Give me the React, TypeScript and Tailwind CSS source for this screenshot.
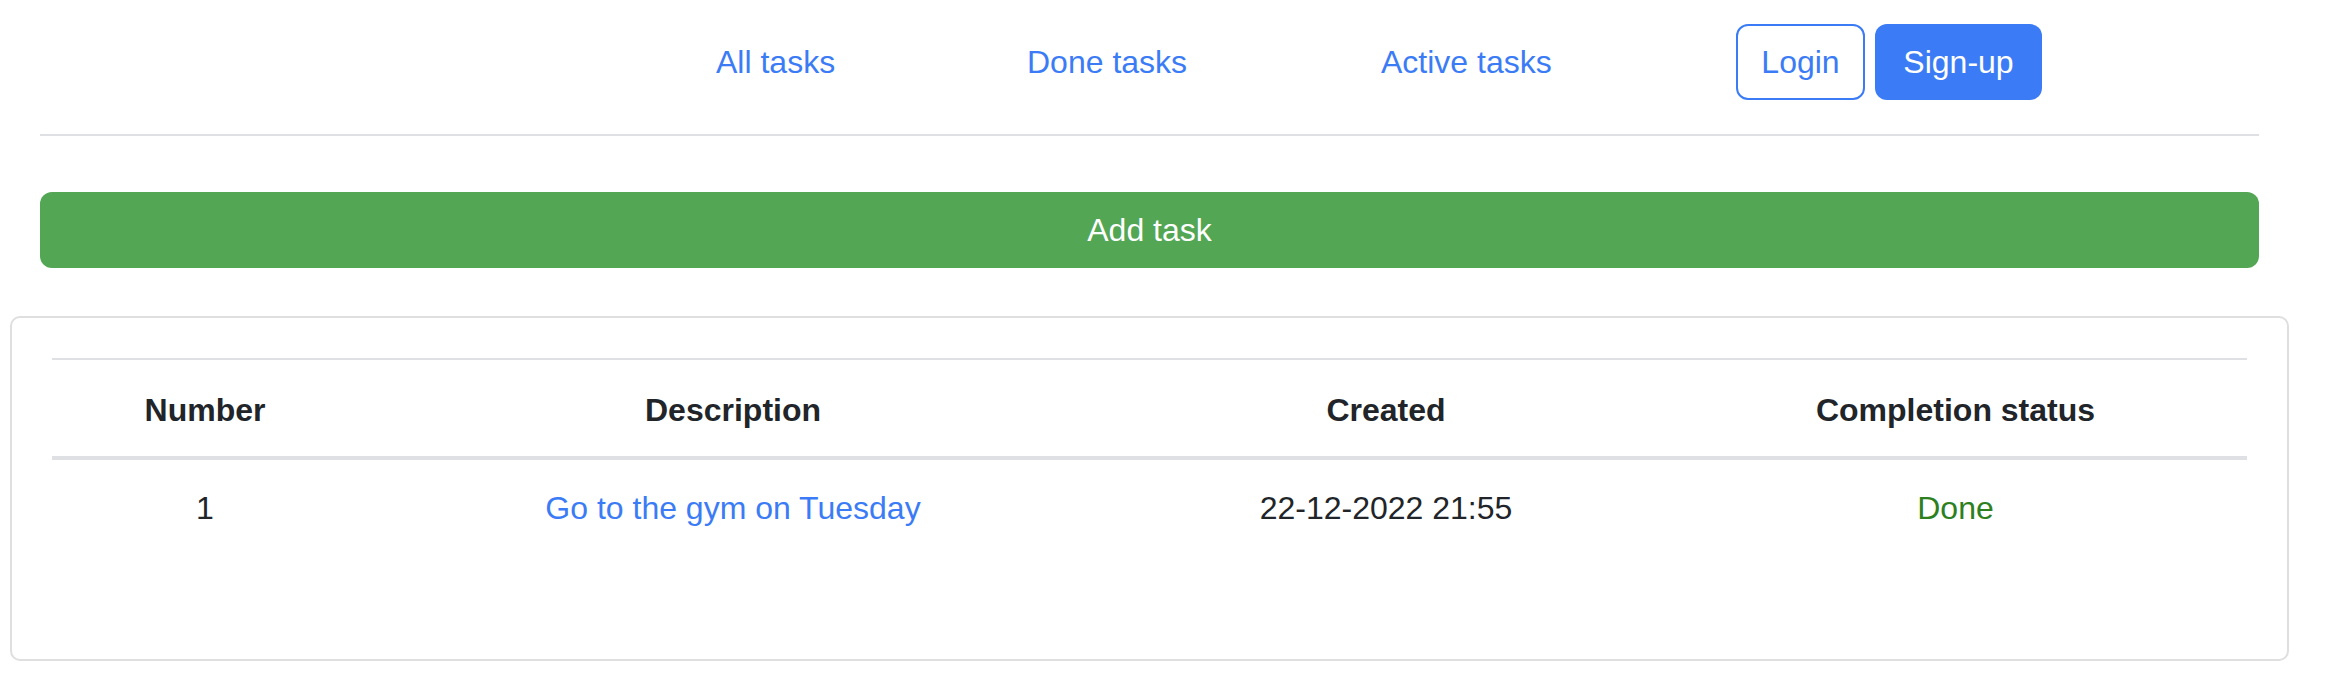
import React from "react";

export default function App() {
  return (
    <div className="w-[2328px] min-h-[690px] bg-white text-[#212529] text-[32px] leading-[48px] font-['Liberation_Sans',Arial,sans-serif]">
      {/* Nav */}
      <nav className="mt-[24px] h-[76px] flex items-center pl-[716px]">
        <a className="w-[311px] text-[#3b7cf6]">All tasks</a>
        <a className="w-[354px] text-[#3b7cf6]">Done tasks</a>
        <a className="w-[355px] text-[#3b7cf6]">Active tasks</a>
        <div className="flex gap-[10px]">
          <button className="w-[129px] h-[76px] border-2 border-[#3b7cf6] rounded-[12px] text-[#3b7cf6] flex items-center justify-center">
            Login
          </button>
          <button className="w-[167px] h-[76px] bg-[#3b7cf6] rounded-[12px] text-white flex items-center justify-center">
            Sign-up
          </button>
        </div>
      </nav>

      <div className="ml-[40px] w-[2219px] mt-[34px] h-[2px] bg-[#dee0e3]" />

      <button className="ml-[40px] w-[2219px] mt-[56px] h-[76px] bg-[#53a653] rounded-[12px] text-white flex items-center justify-center">
        Add task
      </button>

      {/* Card */}
      <div className="ml-[10px] w-[2279px] mt-[48px] border-2 border-[#dfdfdf] rounded-[10px] pt-[40px] px-[40px] pb-[103px]">
        <div className="border-t-2 border-[#dee0e3]">
          <div className="grid grid-cols-[306px_750px_556px_1fr] font-bold text-center pt-[26px] pb-[22px] border-b-4 border-[#dee0e3]">
            <div>Number</div>
            <div>Description</div>
            <div>Created</div>
            <div>Completion status</div>
          </div>
          <div className="grid grid-cols-[306px_750px_556px_1fr] text-center py-[24px]">
            <div>1</div>
            <div>
              <a className="text-[#3b7cf6]">Go to the gym on Tuesday</a>
            </div>
            <div>22-12-2022 21:55</div>
            <div className="text-[#2d8020]">Done</div>
          </div>
        </div>
      </div>
    </div>
  );
}
